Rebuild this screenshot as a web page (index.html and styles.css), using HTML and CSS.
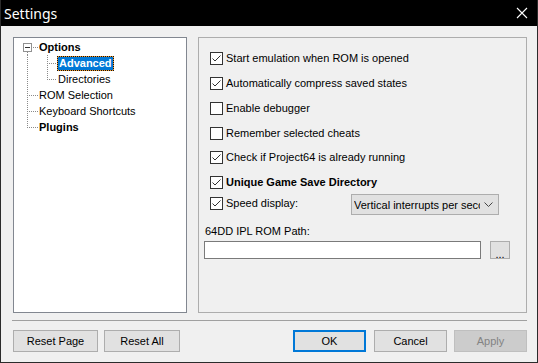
FILE: index.html
```html
<!DOCTYPE html>
<html lang="en">

<head>
    <meta charset="UTF-8">
    <title>Settings</title>
    <link rel="stylesheet" href="styles.css">
</head>

<body>
    <div class="window">
        <div class="titlebar">
            <span class="title">Settings</span>
            <svg class="close" width="12" height="12" viewBox="0 0 12 12">
                <path d="M1 1 L11 11 M11 1 L1 11" stroke="#fff" stroke-width="1.1" fill="none" />
            </svg>
        </div>

        <div class="main">
            <div class="tree">
                <div class="node">
                    <span class="g first"><span class="minus"></span></span>
                    <span class="label bold">Options</span>
                </div>
                <div class="node">
                    <span class="g pipe"></span>
                    <span class="g sub tee"></span>
                    <span class="label bold selected">Advanced</span>
                </div>
                <div class="node">
                    <span class="g pipe"></span>
                    <span class="g sub ell"></span>
                    <span class="label">Directories</span>
                </div>
                <div class="node">
                    <span class="g tee"></span>
                    <span class="label">ROM Selection</span>
                </div>
                <div class="node">
                    <span class="g tee"></span>
                    <span class="label">Keyboard Shortcuts</span>
                </div>
                <div class="node">
                    <span class="g ell"></span>
                    <span class="label bold">Plugins</span>
                </div>
            </div>

            <div class="panel">
                <div class="row">
                    <span class="cb on"><svg viewBox="0 0 11 11"><path d="M1.5 5.5 L4 8 L9.5 2.5" /></svg></span>
                    <span class="text">Start emulation when ROM is opened</span>
                </div>
                <div class="row">
                    <span class="cb on"><svg viewBox="0 0 11 11"><path d="M1.5 5.5 L4 8 L9.5 2.5" /></svg></span>
                    <span class="text">Automatically compress saved states</span>
                </div>
                <div class="row">
                    <span class="cb"></span>
                    <span class="text">Enable debugger</span>
                </div>
                <div class="row short">
                    <span class="cb"></span>
                    <span class="text">Remember selected cheats</span>
                </div>
                <div class="row">
                    <span class="cb on"><svg viewBox="0 0 11 11"><path d="M1.5 5.5 L4 8 L9.5 2.5" /></svg></span>
                    <span class="text">Check if Project64 is already running</span>
                </div>
                <div class="row tight">
                    <span class="cb on"><svg viewBox="0 0 11 11"><path d="M1.5 5.5 L4 8 L9.5 2.5" /></svg></span>
                    <span class="text bold">Unique Game Save Directory</span>
                </div>
                <div class="row speed">
                    <span class="cb on"><svg viewBox="0 0 11 11"><path d="M1.5 5.5 L4 8 L9.5 2.5" /></svg></span>
                    <span class="text speed-label">Speed display:</span>
                    <div class="combo">
                        <span class="combo-text">Vertical interrupts per second</span>
                        <svg class="chevron" width="9" height="5" viewBox="0 0 9 5">
                            <path d="M0.5 0.5 L4.5 4.5 L8.5 0.5" stroke="#444" fill="none" />
                        </svg>
                    </div>
                </div>
                <div class="path-label">64DD IPL ROM Path:</div>
                <div class="path-row">
                    <div class="input"></div>
                    <button class="btn browse">...</button>
                </div>
            </div>
        </div>

        <div class="separator"></div>

        <div class="buttons">
            <button class="btn reset-page">Reset Page</button>
            <button class="btn reset-all">Reset All</button>
            <button class="btn ok">OK</button>
            <button class="btn cancel">Cancel</button>
            <button class="btn apply" disabled>Apply</button>
        </div>
    </div>
</body>

</html>
```

FILE: styles.css
```css
body {
    margin: 0;
    font-family: "Liberation Sans", Arial, sans-serif;
    font-size: 11px;
    color: #000;
}

.window {
    width: 538px;
    height: 363px;
    box-sizing: border-box;
    border: 1px solid #2b2b2b;
    border-top: none;
    background-color: #f0f0f0;
    display: flex;
    flex-direction: column;
}

.titlebar {
    height: 26px;
    background-color: #000;
    display: flex;
    align-items: center;
    justify-content: space-between;
    padding: 0 9px 0 3px;
}

.title {
    color: #fff;
    font-family: "Noto Sans", sans-serif;
    font-size: 14px;
}

.main {
    display: flex;
    gap: 11px;
    padding: 11px 10px 0 12px;
}

/* tree on the left */
.tree {
    width: 174px;
    height: 276px;
    box-sizing: border-box;
    border: 1px solid #828790;
    background-color: #fff;
    padding: 1px 0 0 4px;
}

.node {
    display: flex;
    align-items: center;
    height: 16px;
}

.g {
    width: 20px;
    height: 16px;
    flex-shrink: 0;
    background-repeat: no-repeat;
}

.g.sub {
    width: 19px;
}

.g.pipe {
    background-image: repeating-linear-gradient(to bottom, #8a8a8a 0 1px, transparent 1px 2px);
    background-position: 9px 0;
    background-size: 1px 16px;
}

.g.tee {
    background-image:
        repeating-linear-gradient(to bottom, #8a8a8a 0 1px, transparent 1px 2px),
        repeating-linear-gradient(to right, #8a8a8a 0 1px, transparent 1px 2px);
    background-position: 9px 0, 11px 8px;
    background-size: 1px 16px, 10px 1px;
}

.g.ell {
    background-image:
        repeating-linear-gradient(to bottom, #8a8a8a 0 1px, transparent 1px 2px),
        repeating-linear-gradient(to right, #8a8a8a 0 1px, transparent 1px 2px);
    background-position: 9px 0, 11px 8px;
    background-size: 1px 9px, 10px 1px;
}

.g.first {
    display: flex;
    align-items: center;
    padding-left: 5px;
    box-sizing: border-box;
    background-image:
        repeating-linear-gradient(to bottom, #8a8a8a 0 1px, transparent 1px 2px),
        repeating-linear-gradient(to right, #8a8a8a 0 1px, transparent 1px 2px);
    background-position: 9px 13px, 15px 8px;
    background-size: 1px 3px, 5px 1px;
}

.minus {
    width: 9px;
    height: 9px;
    box-sizing: border-box;
    border: 1px solid #919191;
    background: linear-gradient(#333, #333) center / 5px 1px no-repeat, #fff;
}

.label {
    padding: 0 1px;
    line-height: 13px;
    white-space: nowrap;
}

.bold {
    font-weight: bold;
}

.label.selected {
    color: #fff;
    border: 1px dotted #111;
    background: linear-gradient(#0078d7, #0078d7) padding-box, linear-gradient(#f39a2b, #f39a2b) border-box;
}

/* settings panel */
.panel {
    width: 329px;
    height: 276px;
    box-sizing: border-box;
    border: 1px solid #adadad;
    padding: 14px 0 0 11px;
}

.row {
    display: flex;
    align-items: flex-start;
    height: 25px;
}

.row.short {
    height: 24px;
}

.row.tight {
    height: 18px;
}

.row.speed {
    height: 21px;
}

.row.speed .cb {
    margin-top: 3px;
}

.row.speed .text {
    margin-top: 3px;
}

.cb {
    width: 13px;
    height: 13px;
    box-sizing: border-box;
    border: 1px solid #333;
    background-color: #fff;
    flex-shrink: 0;
}

.cb svg {
    display: block;
    width: 11px;
    height: 11px;
}

.cb path {
    stroke: #333;
    stroke-width: 1;
    fill: none;
}

.text {
    margin-left: 3px;
    line-height: 12px;
    white-space: nowrap;
}

.speed-label {
    width: 125px;
}

.combo {
    width: 148px;
    height: 21px;
    box-sizing: border-box;
    border: 1px solid #adadad;
    background-color: #e1e1e1;
    display: flex;
    align-items: center;
    padding: 0 5px 0 2px;
    gap: 4px;
}

.combo-text {
    flex: 1;
    overflow: hidden;
    white-space: nowrap;
}

.path-label {
    margin: 10px 0 0 -5px;
    line-height: 13px;
}

.path-row {
    display: flex;
    margin: 3px 0 0 -6px;
}

.input {
    width: 277px;
    height: 18px;
    box-sizing: border-box;
    border: 1px solid #7a7a7a;
    background-color: #fff;
}

.btn {
    font-family: "Liberation Sans", Arial, sans-serif;
    font-size: 11px;
    color: #000;
    background-color: #e1e1e1;
    border: 1px solid #adadad;
    padding: 0;
    height: 22px;
}

.btn.browse {
    width: 20px;
    height: 18px;
    margin-left: 9px;
    line-height: 18px;
    padding-top: 3px;
}

/* bottom bar */
.separator {
    height: 1px;
    margin: 7px 10px 0 11px;
    background-color: #a0a0a0;
}

.buttons {
    display: flex;
    margin-top: 9px;
    padding: 0 10px 0 12px;
}

.reset-page {
    width: 85px;
}

.reset-all {
    width: 76px;
    margin-left: 6px;
}

.ok {
    width: 73px;
    margin-left: auto;
    border: 2px solid #0078d7;
}

.cancel {
    width: 73px;
    margin-left: 8px;
}

.apply {
    width: 73px;
    margin-left: 7px;
    background-color: #cccccc;
    border-color: #bfbfbf;
    color: #838383;
}
```
